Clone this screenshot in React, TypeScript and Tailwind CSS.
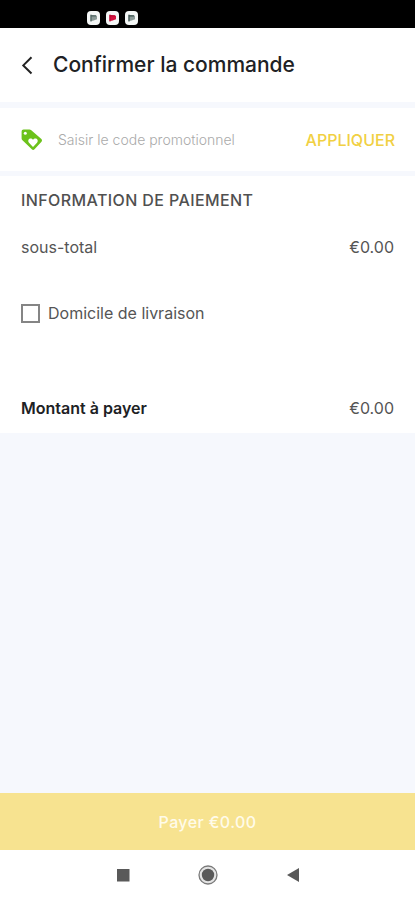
import { useState } from 'react';

const NOTIFICATIONS = [
  { id: 'first', color: '#8b9a97', stem: '#4f6461' },
  { id: 'second', color: '#d3123f', stem: '#b80c34' },
  { id: 'third', color: '#8b9a97', stem: '#39504d' },
];

function StatusBar() {
  return (
    <div className="flex h-7 items-end gap-1.5 bg-black px-[87px] pb-[3px]">
      {NOTIFICATIONS.map((n) => (
        <svg key={n.id} viewBox="0 0 13 14" className="h-3.5 w-[13px]" aria-hidden="true">
          <rect width="13" height="14" rx="4" fill="#f4f7f6" />
          <path d="M3.500 3.800 10 4.800v3.400l-4 1.600-2.500.2z" fill={n.color} />
          <path d="M4 3.800v6.700M4 4.800h5" stroke={n.stem} strokeWidth="1.200" />
        </svg>
      ))}
    </div>
  );
}

function Header() {
  return (
    <header className="flex h-[74px] items-center gap-[15px] bg-white px-[18px]">
      <button type="button" aria-label="Retour" className="flex w-5 justify-center">
        <svg viewBox="0 0 20 20" className="size-5" fill="none" stroke="#222" strokeWidth="2">
          <path d="M13.500 2.300 5.300 10.400l8.200 8.100" />
        </svg>
      </button>
      <h1 className="text-[21px] leading-7 font-medium text-[#202124]">Confirmer la commande</h1>
    </header>
  );
}

function TagIcon() {
  return (
    <svg viewBox="0 0 24 24" className="size-6 shrink-0" aria-hidden="true">
      <path
        d="M3.500 1.500h6c.6 0 1.100.2 1.500.6l10.400 9c.8.800.8 1.800.1 2.600l-7 7.600c-.8.800-1.900.8-2.700 0L2.200 12c-.4-.4-.6-.9-.6-1.500V3.400c0-1.100.8-1.900 1.900-1.900z"
        fill="#6cc21b"
      />
      <circle cx="5.300" cy="5.200" r="1.500" fill="#fff" />
      <path
        d="M13 19l-4-4.200c-1.200-1.300-.9-3.200.4-4 1.200-.7 2.700-.3 3.600 1 .9-1.300 2.400-1.700 3.600-1 1.300.8 1.600 2.700.4 4z"
        fill="#fff"
      />
    </svg>
  );
}

function PromoCode() {
  const [code, setCode] = useState('');

  return (
    <form
      className="mt-1.5 flex h-[63px] items-center bg-white px-5 pt-px"
      onSubmit={(e) => e.preventDefault()}
    >
      <TagIcon />
      <input
        type="text"
        aria-label="Saisir le code promotionnel"
        placeholder="Saisir le code promotionnel"
        value={code}
        onChange={(e) => setCode(e.target.value)}
        className="ml-3.5 min-w-0 flex-1 bg-transparent text-sm text-[#555] outline-none placeholder:font-light placeholder:text-[#aaa]"
      />
      <button type="submit" className="text-base font-medium text-[#f1d043]">
        APPLIQUER
      </button>
    </form>
  );
}

function PaymentInfo() {
  const [delivery, setDelivery] = useState(false);

  return (
    <section className="mt-[5px] bg-white px-[21px] pt-3 pb-[13px] text-base leading-6 text-[#555]">
      <h2 className="font-medium tracking-wide text-[#505050]">INFORMATION DE PAIEMENT</h2>
      <div className="mt-[23px] flex justify-between">
        <span>sous-total</span>
        <span>€0.00</span>
      </div>
      <label className="mt-[42px] flex items-center gap-2">
        <input
          type="checkbox"
          checked={delivery}
          onChange={(e) => setDelivery(e.target.checked)}
          className="size-[19px] appearance-none border-2 border-[#858585] checked:bg-[#f1d043]"
        />
        Domicile de livraison
      </label>
      <div className="mt-[71px] flex justify-between">
        <span className="font-semibold text-[#202124]">Montant à payer</span>
        <span>€0.00</span>
      </div>
    </section>
  );
}

function NavigationBar() {
  return (
    <nav className="flex h-[50px] items-center justify-center gap-[61px] bg-white text-[#595959]">
      <button type="button" aria-label="Applications récentes">
        <svg viewBox="0 0 24 24" className="size-6" fill="currentColor">
          <rect x="6" y="6" width="12.500" height="12.500" />
        </svg>
      </button>
      <button type="button" aria-label="Accueil">
        <svg viewBox="0 0 24 24" className="size-6">
          <circle cx="12" cy="12" r="9" fill="#e4e4e4" stroke="#7a7a7a" strokeWidth="1.300" />
          <circle cx="12" cy="12" r="6.200" fill="currentColor" />
        </svg>
      </button>
      <button type="button" aria-label="Retour système">
        <svg viewBox="0 0 24 24" className="size-6" fill="currentColor">
          <path d="M6 12 18 5v14z" />
        </svg>
      </button>
    </nav>
  );
}

export default function App() {
  return (
    <div className="flex min-h-screen flex-col bg-[#f6f8fd] font-['Inter',sans-serif]">
      <StatusBar />
      <Header />
      <main className="flex-1">
        <PromoCode />
        <PaymentInfo />
      </main>
      <button
        type="button"
        className="h-[57px] bg-[#f7e390] text-base font-medium tracking-wide text-[#fffbea]"
      >
        Payer €0.00
      </button>
      <NavigationBar />
    </div>
  );
}
